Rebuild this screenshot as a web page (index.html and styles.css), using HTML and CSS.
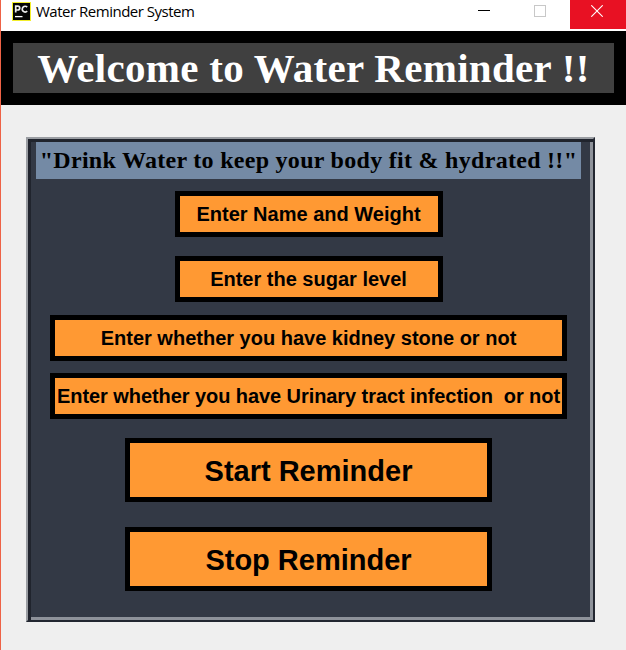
FILE: index.html
```html
<!DOCTYPE html>
<html lang="en">
<head>
<meta charset="utf-8">
<title>Water Reminder System</title>
<link rel="stylesheet" href="styles.css">
</head>
<body>
<div class="window">
  <header class="titlebar">
    <svg class="app-icon" viewBox="0 0 19 19" width="19" height="19">
      <rect width="19" height="19" fill="#f3ee2b"/>
      <rect x="1" y="1" width="17" height="17" fill="#050505"/>
      <path d="M3.7 10.6V4.1H5.8a1.9 1.9 0 0 1 0 3.9H4M15.2 5.1a2.9 2.9 0 1 0 0 4.1" fill="none" stroke="#eee" stroke-width="1.7"/>
      <path d="M3 14.6h7.5" stroke="#fff" stroke-width="1.3"/>
    </svg>
    <span class="caption">Water Reminder System</span>
    <div class="controls">
      <button class="control" aria-label="Minimize"><svg width="12" height="12"><path d="M0 5.5h12" stroke="#000"/></svg></button>
      <button class="control" aria-label="Maximize"><svg width="12" height="12"><rect x=".5" y=".5" width="11" height="11" fill="none" stroke="#c8c8c8"/></svg></button>
      <button class="control close" aria-label="Close"><svg width="12" height="12"><path d="M.3.3l11.4 11.4M11.7.3L.3 11.7" stroke="#fff" stroke-width="1.1"/></svg></button>
    </div>
  </header>
  <h1 class="banner"><span>Welcome to Water Reminder !!</span></h1>
  <main class="panel">
    <h2 class="slogan"><span>"Drink Water to keep your body fit &amp; hydrated !!"</span></h2>
    <button class="action small name">Enter Name and Weight</button>
    <button class="action small sugar">Enter the sugar level</button>
    <button class="action wide kidney">Enter whether you have kidney stone or not</button>
    <button class="action wide urinary">Enter whether you have Urinary tract infection&nbsp; or not</button>
    <button class="action large start">Start Reminder</button>
    <button class="action large stop">Stop Reminder</button>
  </main>
</div>
</body>
</html>
```
FILE: styles.css
```css
* { box-sizing: border-box; }
body { margin: 0; background: #efefef; }
button { padding: 0; font: inherit; }
.window {
  width: 626px;
  height: 650px;
  overflow: hidden;
  border-left: 1px solid #ee6246;
}
.titlebar {
  display: flex;
  height: 31px;
  padding-left: 11px;
  background: #fff;
}
.app-icon { margin-top: 2px; }
.caption {
  margin-left: 5px;
  font: 15px/22px "Open Sans", "Noto Sans", sans-serif;
  letter-spacing: -0.49px;
  white-space: nowrap;
  color: #000;
}
.controls { display: flex; margin-left: auto; }
.control {
  display: flex;
  justify-content: center;
  width: 56px;
  height: 29px;
  padding: 5px 4px 0 0;
  border: 0;
  background: transparent;
}
.control.close { padding-right: 2px; background: #e81123; }
.banner {
  display: flex;
  align-items: center;
  justify-content: center;
  height: 74px;
  margin: 0;
  border: 12px solid #000;
  background: #404040;
  color: #fff;
  font: bold 41px/50px "Liberation Serif", serif;
  letter-spacing: 0.29px;
  white-space: nowrap;
}
.panel {
  display: flex;
  flex-direction: column;
  align-items: center;
  width: 569px;
  height: 485px;
  margin: 32px 0 0 25px;
  padding-right: 4px;
  border: 2px solid;
  border-color: #9a9da2 #222630 #222630 #9a9da2;
  background: #333945;
  box-shadow: inset 3px 3px 0 #20242d, inset -3px -3px 0 #8e929a;
}
.slogan {
  display: flex;
  justify-content: center;
  width: 545px;
  height: 37px;
  margin: 3px 0 12px;
  background: #748aa5;
  color: #000;
  font: bold 24px/37px "Liberation Serif", serif;
  letter-spacing: 0.29px;
  white-space: nowrap;
}
.action {
  flex: none;
  border: 5px solid #000;
  background: #ff9933;
  color: #000;
  font-family: "Liberation Sans", sans-serif;
  font-weight: bold;
  font-size: 20px;
  white-space: pre;
}
.small { width: 268px; height: 46px; }
.wide { width: 517px; height: 46px; }
.large { width: 367px; height: 64px; padding-top: 2px; font-size: 29px; }
.name { margin-bottom: 19px; }
.sugar { margin-bottom: 13px; }
.kidney { margin-bottom: 12px; }
.urinary { margin-bottom: 19px; letter-spacing: -0.07px; }
.start { margin-bottom: 25px; }
```
